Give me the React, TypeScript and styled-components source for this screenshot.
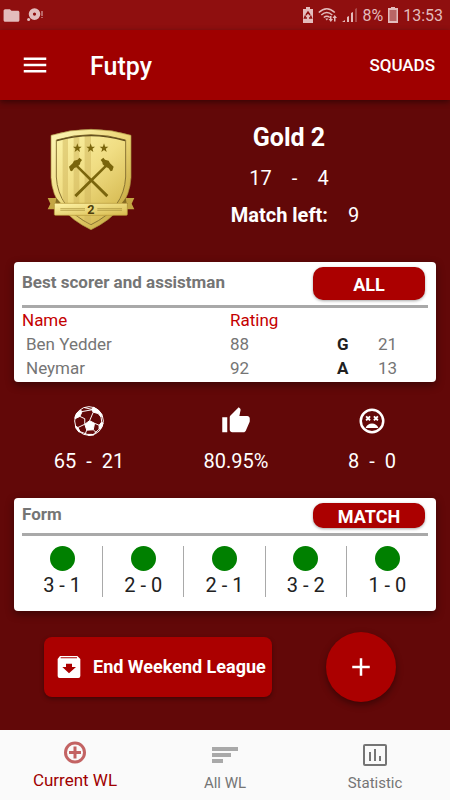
import React from "react";
import styled, { createGlobalStyle } from "styled-components";
import { MdAdd, MdFolder, MdMenu, MdThumbUp } from "react-icons/md";

const color = {
  page: "#620808",
  bar: "#9f0000",
  status: "#8f0f0f",
  statusInk: "#e3bcbc",
  action: "#ab0000",
  heading: "#c40000",
  muted: "#757575",
  rule: "#a9a9a9",
  ink: "#212121",
  win: "#008000",
};

const GlobalStyle = createGlobalStyle`
  * { box-sizing: border-box; }
  body { margin: 0; background: ${color.page}; font-family: Roboto, "Liberation Sans", sans-serif; color: #fff; }
  button, a { font: inherit; color: inherit; text-decoration: none; }
  button { border: 0; padding: 0; background: none; cursor: pointer; }
  h1, h2, p { margin: 0; }
  svg { display: block; flex: none; }
`;

const Screen = styled.div`
  display: flex;
  flex-direction: column;
  min-height: 100vh;
`;

const StatusBar = styled.div`
  display: flex;
  align-items: center;
  justify-content: space-between;
  height: 30px;
  padding: 0 7px 0 2px;
  background: ${color.status};
  color: ${color.statusInk};
  font-size: 16px;
`;

const StatusGroup = styled.div<{ $gap: number }>`
  display: flex;
  align-items: center;
  gap: ${(p) => p.$gap}px;
`;

const AppBar = styled.header`
  display: flex;
  align-items: center;
  height: 70px;
  padding: 0 15px 0 20px;
  background: ${color.bar};
  box-shadow: 0 2px 6px rgba(0, 0, 0, 0.45);
`;

const AppTitle = styled.h1`
  flex: 1;
  padding: 2px 0 0 40px;
  font-size: 25px;
  font-weight: 500;
`;

const BarButton = styled.button`
  font-size: 17px;
  font-weight: 500;
`;

const Main = styled.main`
  flex: 1;
  display: flex;
  flex-direction: column;
`;

const Hero = styled.section`
  display: grid;
  grid-template-columns: 180fr 218fr 52fr;
  height: 162px;
`;

const CrestCell = styled.div`
  display: flex;
  justify-content: center;
  padding: 28px 0 0 2px;
`;

const Summary = styled.div`
  display: flex;
  flex-direction: column;
  align-items: center;
  padding-top: 22px;
  font-size: 20px;
  white-space: nowrap;
`;

const Rank = styled.h2`
  font-size: 25px;
  line-height: 32px;
  font-weight: 700;
`;

const Tally = styled.p`
  display: flex;
  gap: 20px;
  margin-top: 8px;
  line-height: 32px;
`;

const MatchesLeft = styled.p`
  display: flex;
  gap: 20px;
  padding-left: 12px;
  margin-top: 5px;
  line-height: 32px;
`;

const Card = styled.section`
  margin: 0 14px;
  padding: 0 8px;
  background: #fff;
  border-radius: 4px;
  color: ${color.muted};
  box-shadow: 0 3px 8px rgba(0, 0, 0, 0.4);
`;

const CardHeader = styled.div<{ $height: number }>`
  display: flex;
  align-items: center;
  justify-content: space-between;
  height: ${(p) => p.$height}px;
  padding-right: 3px;
  border-bottom: 3px solid ${color.rule};
`;

const CardTitle = styled.h2`
  font-size: 17px;
  line-height: 20px;
  font-weight: 700;
  padding-bottom: 3px;
`;

const PillButton = styled.button<{ $height: number }>`
  width: 112px;
  height: ${(p) => p.$height}px;
  padding-top: 2px;
  border-radius: 10px;
  background: ${color.action};
  color: #fff;
  font-size: 18px;
  font-weight: 700;
  box-shadow: 0 1px 3px rgba(0, 0, 0, 0.35);
`;

const PlayerTable = styled.table`
  width: 100%;
  margin-bottom: 2px;
  table-layout: fixed;
  border-collapse: collapse;
  font-size: 17px;
  line-height: 24px;
  text-align: left;
  th, td { padding: 0; font-weight: 400; }
  th { color: ${color.heading}; }
  td:first-child { padding-left: 4px; }
  td:nth-child(3) { color: ${color.ink}; font-weight: 700; }
`;

const NameCol = styled.col` width: 208px; `;
const RatingCol = styled.col` width: 107px; `;
const KindCol = styled.col` width: 41px; `;

const Stats = styled.section`
  display: grid;
  grid-template-columns: 178fr 116fr 156fr;
  height: 116px;
  padding-top: 24px;
`;

const Stat = styled.div`
  display: flex;
  flex-direction: column;
  align-items: center;
  gap: 9px;
  font-size: 20px;
  line-height: 32px;
  white-space: pre;
`;

const FormList = styled.ul`
  display: grid;
  grid-template-columns: repeat(5, 1fr);
  margin: 0;
  padding: 10px 0 14px;
  list-style: none;
`;

const FormItem = styled.li`
  display: flex;
  flex-direction: column;
  align-items: center;
  height: 51px;
  font-size: 20px;
  line-height: 28px;
  color: ${color.ink};
  &:not(:last-child) { border-right: 1px solid ${color.rule}; }
`;

const ResultDot = styled.span`
  flex: none;
  width: 25px;
  height: 25px;
  border-radius: 50%;
  background: ${color.win};
`;

const Actions = styled.section`
  flex: 1;
  display: flex;
  align-items: center;
  justify-content: space-between;
  min-height: 119px;
  padding: 0 54px 8px 44px;
`;

const EndButton = styled.button`
  display: flex;
  align-items: center;
  gap: 9px;
  height: 60px;
  padding: 0 6px 0 10px;
  border-radius: 8px;
  background: ${color.action};
  font-size: 18px;
  font-weight: 700;
  white-space: nowrap;
  box-shadow: 0 2px 4px rgba(0, 0, 0, 0.35);
`;

const AddButton = styled.button`
  display: flex;
  align-items: center;
  justify-content: center;
  width: 70px;
  height: 70px;
  border-radius: 50%;
  background: ${color.action};
  box-shadow: 0 3px 7px rgba(0, 0, 0, 0.4);
`;

const BottomNav = styled.nav`
  display: grid;
  grid-template-columns: repeat(3, 1fr);
  height: 70px;
  background: #fafafa;
`;

const NavLink = styled.a<{ $active?: boolean }>`
  display: flex;
  flex-direction: column;
  align-items: center;
  padding-top: ${(p) => (p.$active ? 8 : 10)}px;
  gap: 2px;
  && { color: ${(p) => (p.$active ? color.bar : color.muted)}; }
  font-size: ${(p) => (p.$active ? 17 : 15)}px;
  line-height: 22px;
`;

const Faded = styled.span`
  opacity: 0.6;
`;

const DiscIcon = () => (
  <svg width="16" height="14" viewBox="0 0 16 14" fill="currentColor">
    <path fillRule="evenodd" d="M7.500 .3a5.800 5.800 0 1 1 0 11.600A5.800 5.800 0 0 1 7.500 .3ZM7.500 4.500a1.600 1.600 0 1 0 0 3.200a1.600 1.600 0 0 0 0-3.200Z" />
    <circle cx="1.600" cy="11.500" r="1.500" />
    <path d="M14.500 3h1v5h-1zM14.500 9h1v1h-1z" />
  </svg>
);

const BatterySaverIcon = () => (
  <svg width="12" height="16" viewBox="0 0 12 16">
    <path fill="currentColor" d="M4 0h4v2h3v14H1V2h3z" />
    <path fill="none" stroke={color.status} strokeWidth="1.500" d="M4 8l2-3 2 3M8.500 8.500l1 2.500H7M5 11H2.500l1-2.500" />
  </svg>
);

const WifiIcon = () => (
  <svg width="20" height="16" viewBox="0 0 20 16" fill="none" stroke="currentColor" strokeWidth="1.500">
    <path d="M.8 5.500q8-7.500 16 0M3.300 8q5.500-5 11 0M5.800 10.500q3-2.500 6 0" />
    <path fill="currentColor" stroke="none" d="M7.300 11.500h3l-1.500 2zM12 9h1.500v3H15l-2.200 3-2.300-3H12zM16 14.500h1.500v-3.500H19l-2.300-3-2.200 3H16z" />
  </svg>
);

const SignalIcon = () => (
  <svg width="16" height="16" viewBox="0 0 16 16" fill="currentColor">
    <path d="M0 15l3-2v2zM5 10l2-1v6H5zM9 6l2-1v10H9z" />
    <path opacity=".35" d="M13 2l2-1v14h-2z" />
  </svg>
);

const BatteryIcon = () => (
  <svg width="12" height="16" viewBox="0 0 12 16">
    <path fill="currentColor" d="M4 0h4v1h3v15H1V1h3z" />
    <path fill={color.status} opacity=".5" d="M2.500 3h7v11h-7z" />
  </svg>
);

const star = "0,-14 3.500,-4 13,-4 5.500,2 8,12 0,6 -8,12 -5.500,2 -13,-4 -3.500,-4";

const Hammer = () => (
  <path fill="#7a650c" d="M116 154L127 144 131 136 142 133 147 127 155 134 150 141 149 147 144 151 234 239 228 246 138 156 132 158 125 168 120 166Z" />
);

const Crest = () => (
  <svg width="88" height="103" viewBox="50 38 264 309" role="img" aria-label="Gold 2">
    <defs>
      <linearGradient id="gold" x1="0" y1="0" x2="1" y2="1">
        <stop offset="0" stopColor="#fdf6b8" />
        <stop offset=".5" stopColor="#ecd777" />
        <stop offset="1" stopColor="#b9982f" />
      </linearGradient>
      <linearGradient id="face" x1="0" y1="0" x2=".7" y2="1">
        <stop offset="0" stopColor="#fcf3a7" />
        <stop offset=".5" stopColor="#f0dd83" />
        <stop offset="1" stopColor="#d5b950" />
      </linearGradient>
      <linearGradient id="ribbon" x1="0" y1="0" x2="1" y2="1">
        <stop offset="0" stopColor="#fff5a9" />
        <stop offset="1" stopColor="#d7ba4d" />
      </linearGradient>
      <clipPath id="inner">
        <path d="M78 74Q132 58 182 58T286 74V185Q281 280 182 328Q83 280 78 185Z" />
      </clipPath>
    </defs>
    <path fill="url(#gold)" stroke="#aa913f" strokeWidth="2" d="M62 60Q120 42 182 42T302 60V187Q296 289 182 343Q68 289 62 187Z" />
    <path fill="url(#face)" stroke="#8a7433" strokeWidth="3" d="M78 74Q132 58 182 58T286 74V185Q281 280 182 328Q83 280 78 185Z" />
    <g clipPath="url(#inner)" fill="#cfb65c" opacity=".5">
      <path d="M97 60h16v250H97zM130 60h17v260h-17zM163 55h19v280h-19z" />
    </g>
    <path fill="none" stroke="#5f4b1b" strokeWidth="4" d="M80 76Q134 61 182 61T284 76" />
    <g fill="#7a650c">
      <polygon points={star} transform="translate(141 98)" />
      <polygon points={star} transform="translate(181 98)" />
      <polygon points={star} transform="translate(221 98)" />
    </g>
    <Hammer />
    <g transform="translate(366 0) scale(-1 1)"><Hammer /></g>
    <path fill="#c3a543" d="M52 248H78V282H52L60 265ZM312 248H286V282H312L304 265Z" />
    <path fill="#846b22" d="M78 248L92 264H72V282ZM286 248L274 264H292V282Z" />
    <rect x="72" y="264" width="219" height="36" rx="3" fill="url(#ribbon)" stroke="#b49538" strokeWidth="2" />
    <path stroke="#a58d38" strokeWidth="2" d="M90 280H164M90 285H164M201 280H275M201 285H275" />
    <text x="182" y="296" textAnchor="middle" fontSize="38" fontWeight="700" fill="#4e3e0c">2</text>
  </svg>
);

const BallIcon = () => (
  <svg width="30" height="30" viewBox="2 2 92 92" fill="none" stroke="#fff" strokeWidth="3">
    <circle cx="48" cy="48" r="44" />
    <path fill="#fff" d="M50 47L65 55 61 75 41 76 35 58Z" />
    <path fill="#fff" d="M5 36L10 24 23 15 27 19 20 34 5 41ZM55 12L62 6 77 15 88 29 85 36 76 25 61 21ZM87 51L91 55 85 70 79 73 79 61ZM6 63L14 68 21 81 17 82 8 70ZM43 89L58 89 62 91 47 92Z" />
    <path d="M27 19L55 14M20 34L35 41 35 58M50 47L61 21M65 55L79 61M61 75L71 84M41 76L36 89M35 58L14 68M21 81L43 89M79 73L60 90M85 36L87 51M34 7L55 12" />
  </svg>
);

const DeadFaceIcon = () => (
  <svg width="30" height="30" viewBox="0 0 24 24" fill="#fff">
    <path d="M12 2C6.470 2 2 6.500 2 12A10 10 0 0 0 22 12A10 10 0 0 0 12 2M12 20A8 8 0 1 1 12 4A8 8 0 1 1 12 20M16.180 7.760L15.120 8.820 14.060 7.760 13 8.820 14.060 9.880 13 10.940 14.060 12 15.120 10.940 16.180 12 17.240 10.940 16.180 9.880 17.240 8.820ZM7.820 12L8.880 10.940 9.940 12 11 10.940 9.940 9.880 11 8.820 9.940 7.760 8.880 8.820 7.820 7.760 6.760 8.820 7.820 9.880 6.760 10.940ZM12 14C9.670 14 7.690 15.460 6.890 17.500H17.110C16.310 15.460 14.330 14 12 14Z" />
  </svg>
);

const ArchiveIcon = () => (
  <svg width="30" height="30" viewBox="0 0 90 90" fill="#fff">
    <path fillRule="evenodd" d="M18 12H70L79 21V72Q79 78 73 78H17Q11 78 11 72V21ZM20 16V19H69V16ZM36 35V45H25L45 64 66 45H54V35Z" />
  </svg>
);

const PlusCircleIcon = () => (
  <svg width="26" height="29" viewBox="0 0 26 29" fill="none" stroke="currentColor" strokeWidth="3">
    <circle cx="13" cy="14.500" r="9.500" />
    <path d="M13 8.500v12M7 14.500h12" />
  </svg>
);

const SortIcon = () => (
  <svg width="26" height="30" viewBox="0 0 26 30" fill="currentColor">
    <path d="M0 7h26v4H0zM0 13h19v4H0zM0 19h11v4H0z" />
  </svg>
);

const ChartBoxIcon = () => (
  <svg width="30" height="30" viewBox="0 0 30 30" fill="none" stroke="currentColor">
    <rect x="4" y="5" width="22" height="20" rx="1" strokeWidth="2" />
    <path strokeWidth="2" d="M10 12v9M15 9v12M20 16v5" />
  </svg>
);

const players = [
  { name: "Ben Yedder", rating: 88, kind: "G", count: 21 },
  { name: "Neymar", rating: 92, kind: "A", count: 13 },
];

const form = ["3 - 1", "2 - 0", "2 - 1", "3 - 2", "1 - 0"];

export default function App() {
  return (
    <Screen>
      <GlobalStyle />
      <StatusBar>
        <StatusGroup $gap={6}>
          <MdFolder size={19} />
          <DiscIcon />
        </StatusGroup>
        <StatusGroup $gap={4}>
          <BatterySaverIcon />
          <WifiIcon />
          <SignalIcon />
          <span>8%</span>
          <BatteryIcon />
          <span>13:53</span>
        </StatusGroup>
      </StatusBar>
      <AppBar>
        <button aria-label="Menu"><MdMenu size={30} /></button>
        <AppTitle>Futpy</AppTitle>
        <BarButton>SQUADS</BarButton>
      </AppBar>
      <Main>
        <Hero>
          <CrestCell><Crest /></CrestCell>
          <Summary>
            <Rank>Gold 2</Rank>
            <Tally><span>17</span><span>-</span><span>4</span></Tally>
            <MatchesLeft><strong>Match left:</strong><span>9</span></MatchesLeft>
          </Summary>
        </Hero>
        <Card>
          <CardHeader $height={46}>
            <CardTitle>Best scorer and assistman</CardTitle>
            <PillButton $height={33}>ALL</PillButton>
          </CardHeader>
          <PlayerTable>
            <colgroup><NameCol /><RatingCol /><KindCol /><col /></colgroup>
            <thead>
              <tr><th>Name</th><th>Rating</th><th /><th /></tr>
            </thead>
            <tbody>
              {players.map((p) => (
                <tr key={p.name}>
                  <td>{p.name}</td><td>{p.rating}</td><td>{p.kind}</td><td>{p.count}</td>
                </tr>
              ))}
            </tbody>
          </PlayerTable>
        </Card>
        <Stats>
          <Stat><BallIcon /><span>65  -  21</span></Stat>
          <Stat><MdThumbUp size={30} /><span>80.95%</span></Stat>
          <Stat><DeadFaceIcon /><span>8  -  0</span></Stat>
        </Stats>
        <Card>
          <CardHeader $height={38}>
            <CardTitle>Form</CardTitle>
            <PillButton $height={25}>MATCH</PillButton>
          </CardHeader>
          <FormList>
            {form.map((score) => (
              <FormItem key={score}><ResultDot />{score}</FormItem>
            ))}
          </FormList>
        </Card>
        <Actions>
          <EndButton><ArchiveIcon />End Weekend League</EndButton>
          <AddButton aria-label="Add match"><MdAdd size={30} /></AddButton>
        </Actions>
      </Main>
      <BottomNav>
        <NavLink href="#current" $active><Faded><PlusCircleIcon /></Faded>Current WL</NavLink>
        <NavLink href="#all"><Faded><SortIcon /></Faded>All WL</NavLink>
        <NavLink href="#statistic"><ChartBoxIcon />Statistic</NavLink>
      </BottomNav>
    </Screen>
  );
}
